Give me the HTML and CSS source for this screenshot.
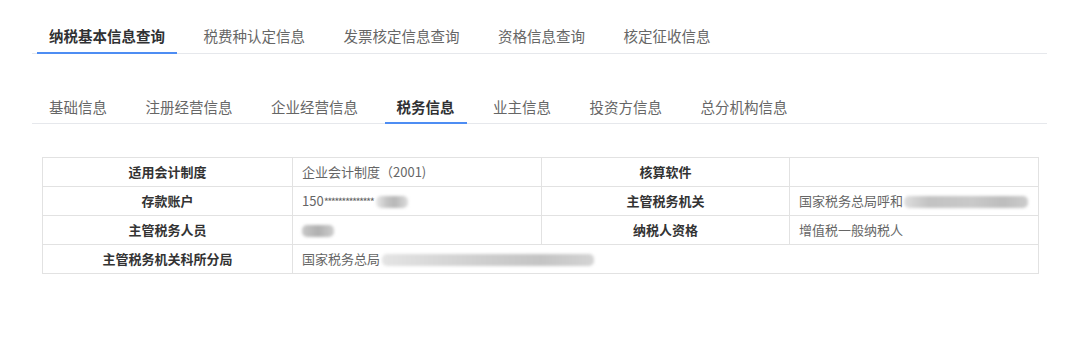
FILE: index.html
```html
<!DOCTYPE html>
<html lang="zh-CN">
<head>
<meta charset="utf-8">
<title>纳税基本信息查询</title>
<link rel="stylesheet" href="styles.css">
</head>
<body>
<div class="page">
  <div class="tabs tabs-main">
    <div class="tab active">纳税基本信息查询</div>
    <div class="tab">税费种认定信息</div>
    <div class="tab">发票核定信息查询</div>
    <div class="tab">资格信息查询</div>
    <div class="tab">核定征收信息</div>
  </div>
  <div class="tabs tabs-sub">
    <div class="tab">基础信息</div>
    <div class="tab">注册经营信息</div>
    <div class="tab">企业经营信息</div>
    <div class="tab active">税务信息</div>
    <div class="tab">业主信息</div>
    <div class="tab">投资方信息</div>
    <div class="tab">总分机构信息</div>
  </div>
  <table class="info">
    <colgroup>
      <col class="c1"><col class="c2"><col class="c3"><col class="c4">
    </colgroup>
    <tr>
      <th>适用会计制度</th>
      <td>企业会计制度（2001)</td>
      <th>核算软件</th>
      <td></td>
    </tr>
    <tr>
      <th>存款账户</th>
      <td>150<span class="stars">**************</span><span class="blur b-acct"></span></td>
      <th>主管税务机关</th>
      <td>国家税务总局呼和<span class="blur b-org"></span></td>
    </tr>
    <tr>
      <th>主管税务人员</th>
      <td><span class="blur b-person"></span></td>
      <th>纳税人资格</th>
      <td>增值税一般纳税人</td>
    </tr>
    <tr>
      <th>主管税务机关科所分局</th>
      <td colspan="3">国家税务总局<span class="blur b-branch"></span></td>
    </tr>
  </table>
</div>
</body>
</html>
```

FILE: styles.css
```css
html, body {
  margin: 0;
  background: #ffffff;
}

body {
  font-family: "Noto Sans CJK SC", "Noto Sans", sans-serif;
}

.page {
  margin-left: 32px;
  width: 1015px;
  padding-top: 18px;
}

.tabs {
  display: flex;
  gap: 14.5px;
  padding-left: 5px;
  border-bottom: 1px solid #e6e8ec;
}

.tab {
  position: relative;
  padding: 0 12px;
  font-size: 14.5px;
  color: #666666;
  white-space: nowrap;
}

.tabs-main .tab {
  height: 35px;
  line-height: 35px;
}

.tabs-sub {
  margin-top: 37px;
}

.tabs-sub .tab {
  height: 32px;
  line-height: 32px;
}

.tab.active {
  font-weight: 700;
  color: #303133;
}

.tab.active::after {
  content: "";
  position: absolute;
  left: 0;
  right: 0;
  bottom: -1px;
  height: 2px;
  background: #4e8df3;
}

.info {
  margin-top: 33px;
  margin-left: 10px;
  width: 996px;
  table-layout: fixed;
  border-collapse: collapse;
  border: 1px solid #e2e2e2;
  font-size: 13px;
}

.c1 { width: 250px; }
.c2 { width: 249px; }
.c3 { width: 248px; }
.c4 { width: 249px; }

.info th,
.info td {
  border: 1px solid #e2e2e2;
  height: 28px;
  padding: 0;
  line-height: 28px;
  white-space: nowrap;
  overflow: hidden;
}

.info th {
  font-weight: 700;
  color: #333333;
  text-align: center;
}

.info td {
  color: #666666;
  text-align: left;
  padding-left: 9px;
}

.stars {
  font-size: 11px;
  letter-spacing: -1.6px;
}

.blur {
  display: inline-block;
  vertical-align: middle;
  height: 12px;
  border-radius: 5px;
  background: #bdbdbd;
  filter: blur(1.5px);
}

.b-acct {
  width: 32px;
  margin-left: 3px;
  background: linear-gradient(90deg, #e8e8e8 0%, #c2c2c2 35%, #b8b8b8 60%, #dcdcdc 100%);
}

.b-person {
  width: 32px;
  background: linear-gradient(90deg, #c8c8c8 0%, #b0b0b0 50%, #cdcdcd 100%);
}

.b-org {
  width: 124px;
  margin-left: 1px;
  background: linear-gradient(90deg, #dedede 0%, #c2c2c2 20%, #c9c9c9 55%, #bdbdbd 80%, #cccccc 100%);
}

.b-branch {
  width: 212px;
  margin-left: 2px;
  background: linear-gradient(90deg, #e4e4e4 0%, #d8d8d8 25%, #cdcdcd 50%, #c4c4c4 75%, #d4d4d4 100%);
}
```
